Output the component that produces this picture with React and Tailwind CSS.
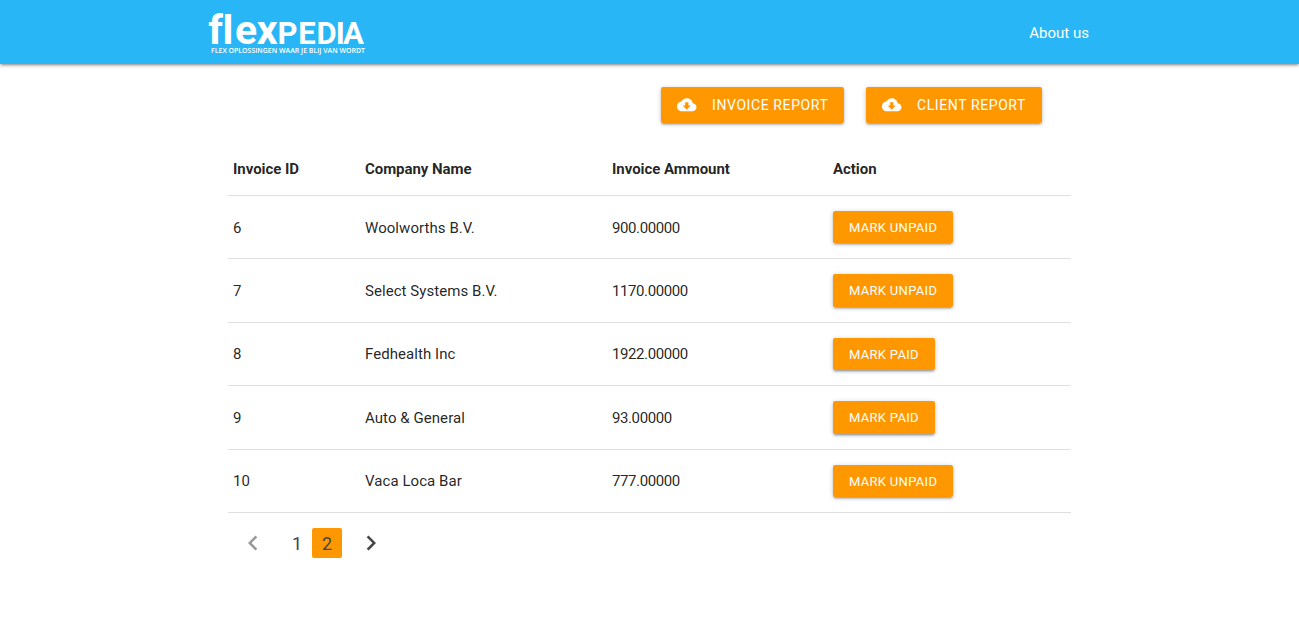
import React from "react";

const invoices = [
  { id: 6, company: "Woolworths B.V.", amount: "900.00000", action: "Mark Unpaid" },
  { id: 7, company: "Select Systems B.V.", amount: "1170.00000", action: "Mark Unpaid" },
  { id: 8, company: "Fedhealth Inc", amount: "1922.00000", action: "Mark Paid" },
  { id: 9, company: "Auto & General", amount: "93.00000", action: "Mark Paid" },
  { id: 10, company: "Vaca Loca Bar", amount: "777.00000", action: "Mark Unpaid" },
];

const raised =
  "shadow-[0_2px_2px_0_rgba(0,0,0,0.14),0_3px_1px_-2px_rgba(0,0,0,0.12),0_1px_5px_0_rgba(0,0,0,0.2)]";

function Logo() {
  return (
    <svg width="164" height="60" viewBox="0 0 164 60" fill="#fff" className="block" aria-label="Flexpedia">
      <text x="4.2 18.5 31 52.8" y="44" fontFamily="Roboto" fontWeight="700" fontSize="41">flex</text>
      <text x="73.5 94.2 112.4 131.8 139" y="44" fontFamily="Roboto" fontWeight="700" fontSize="31">PEDIA</text>
      <text x="7" y="53" fontFamily="Open Sans" fontWeight="600" fontSize="6.8" textLength="154" lengthAdjust="spacingAndGlyphs">FLEX OPLOSSINGEN WAAR JE BLIJ VAN WORDT</text>
    </svg>
  );
}

function ReportButton({ children }) {
  return (
    <button className={"flex h-9 items-center rounded-[2px] bg-[#ff9800] px-4 text-[14px] leading-9 tracking-[0.6px] whitespace-nowrap text-white uppercase " + raised}>
      <svg viewBox="0 0 24 24" fill="currentColor" className="mr-[15px] size-[19.5px]">
        <path d="M19.35 10.04C18.67 6.59 15.64 4 12 4 9.11 4 6.6 5.64 5.35 8.04 2.34 8.36 0 10.91 0 14c0 3.31 2.69 6 6 6h13c2.76 0 5-2.24 5-5 0-2.64-2.05-4.78-4.65-4.96zM17 13l-5 5-5-5h3V9h4v4h3z" />
      </svg>
      {children}
    </button>
  );
}

function Chevron({ d, className }) {
  return (
    <svg viewBox="0 0 24 24" fill="currentColor" className={"size-[30px] " + className}>
      <path d={d} />
    </svg>
  );
}

export default function App() {
  return (
    <div className="min-h-[630px] bg-white font-[Roboto,sans-serif] text-[15px] leading-[22.5px] text-black/87">
      <nav className={"flex h-16 items-start justify-between bg-[#29b6f6] pr-[210px] pl-[204px] text-white " + raised}>
        <Logo />
        <a href="#about" className="leading-[66px]">About us</a>
      </nav>
      <main className="ml-[228px] w-[843px]">
        <div className="flex justify-end gap-[22px] pt-[23px] pr-[29px]">
          <ReportButton>Invoice Report</ReportButton>
          <ReportButton>Client Report</ReportButton>
        </div>
        <table className="mt-[19.5px] w-full table-fixed border-collapse text-left">
          <colgroup>
            <col className="w-[132px]" />
            <col className="w-[247px]" />
            <col className="w-[221px]" />
            <col />
          </colgroup>
          <thead>
            <tr className="border-b border-black/12">
              {["Invoice ID", "Company Name", "Invoice Ammount", "Action"].map((h) => (
                <th key={h} className="px-[5px] py-[15px] font-bold tracking-[-0.05px]">{h}</th>
              ))}
            </tr>
          </thead>
          <tbody>
            {invoices.map((r) => (
              <tr key={r.id} className="border-b border-black/12">
                <td className="px-[5px] pt-[16.5px] pb-[15px]">{r.id}</td>
                <td className="px-[5px] pt-[16.5px] pb-[15px] tracking-[0.06px]">{r.company}</td>
                <td className="px-[5px] pt-[16.5px] pb-[15px] tracking-[-0.4px]">{r.amount}</td>
                <td className="px-[5px] py-[15px]">
                  <button className={"block h-[32.4px] rounded-[2px] bg-[#ff9800] px-4 pt-px text-[13px] leading-[32.4px] tracking-[0.3px] text-white uppercase " + raised}>
                    {r.action}
                  </button>
                </td>
              </tr>
            ))}
          </tbody>
        </table>
        <div className="mt-[15px] flex h-[30px] items-center text-[18px] leading-[30px] text-[#444]">
          <Chevron className="ml-[10px] text-[#999]" d="M15.41 7.41L14 6l-6 6 6 6 1.41-1.41L10.83 12z" />
          <span className="ml-[14px] w-[30px] pt-px text-center leading-[29px]">1</span>
          <span className="h-[30px] w-[30px] rounded-[2px] bg-[#ff9800] pt-px text-center">2</span>
          <Chevron className="ml-[14px]" d="M10 6L8.59 7.41 13.17 12l-4.58 4.59L10 18l6-6z" />
        </div>
      </main>
    </div>
  );
}
